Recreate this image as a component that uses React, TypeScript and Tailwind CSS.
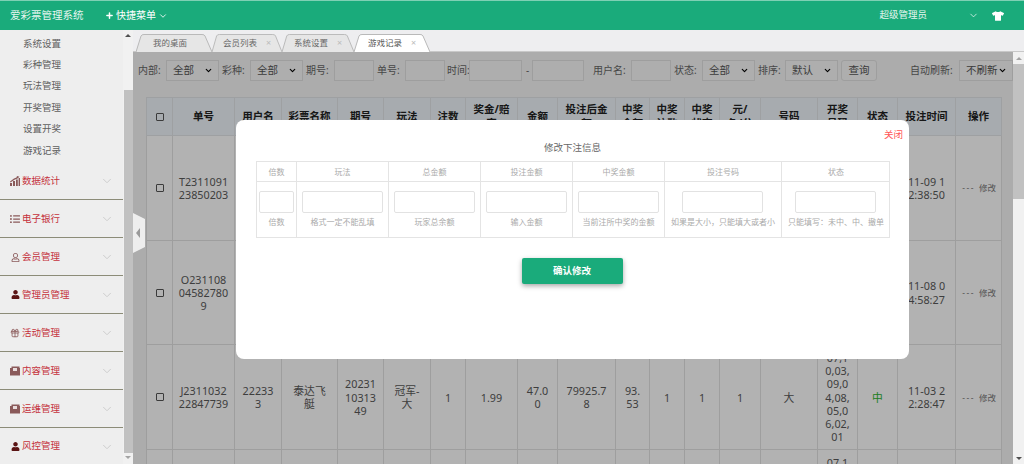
import { ChevronDown, Gift, Plus } from "lucide-react";
import { FaListUl, FaRegUser, FaTshirt, FaUser } from "react-icons/fa";

const font = { fontFamily: '"Noto Sans", "Noto Sans CJK SC", sans-serif' };

const subMenu = ["系统设置", "彩种管理", "玩法管理", "开奖管理", "设置开奖", "游戏记录"];

function ChartIcon() {
  return (
    <svg className="h-[10px] w-[10px]" viewBox="0 0 10 10" fill="currentColor">
      <path d="M0 7h2v3H0zM3 5h2v5H3zM6 3.5h1.800v6.500H6zM8.600 2H10v8H8.600z" />
      <path d="M0 5.500 L4 2.500 L6.500 1.500 L7 0 L9.500 0.800 L7.500 2.500 L4.500 3.800 L0.500 6.500 Z" />
    </svg>
  );
}

function BookIcon() {
  return (
    <svg className="h-[10px] w-[10px]" viewBox="0 0 10 10">
      <path d="M0 2h1.500V0.500H9.500V2H10v7.500H0z" fill="currentColor" />
      <path d="M3 2h4v3H3z" fill="#e8dcdc" />
    </svg>
  );
}

const groups = [
  { name: "数据统计", icon: <ChartIcon /> },
  { name: "电子银行", icon: <FaListUl className="h-[10px] w-[10px]" /> },
  { name: "会员管理", icon: <FaRegUser className="h-[9px] w-[9px]" /> },
  { name: "管理员管理", icon: <FaUser className="h-[9px] w-[9px] text-[#5a1414]" /> },
  { name: "活动管理", icon: <Gift className="h-[10px] w-[10px]" /> },
  { name: "内容管理", icon: <BookIcon /> },
  { name: "运维管理", icon: <BookIcon /> },
  { name: "风控管理", icon: <FaUser className="h-[9px] w-[9px] text-[#5a1414]" /> },
];

const tabs = [
  { label: "我的桌面", w: "w-[76px] pr-[8px]", close: false, active: false },
  { label: "会员列表", w: "w-[70px]", close: true, active: false },
  { label: "系统设置", w: "w-[72px]", close: true, active: false },
  { label: "游戏记录", w: "w-[76px]", close: true, active: true },
];

const headers = [
  { label: "", w: "w-[26px]" },
  { label: "单号", w: "w-[62px]" },
  { label: "用户名", w: "w-[47px]" },
  { label: "彩票名称", w: "w-[56px]" },
  { label: "期号", w: "w-[46px]" },
  { label: "玩法", w: "w-[47px]" },
  { label: "注数", w: "w-[35px]" },
  { label: "奖金/赔率", w: "w-[52px]" },
  { label: "金额", w: "w-[40px]" },
  { label: "投注后金额", w: "w-[58px]" },
  { label: "中奖金额", w: "w-[34px]" },
  { label: "中奖注数", w: "w-[35px]" },
  { label: "中奖状态", w: "w-[35px]" },
  { label: "元/\n角/分", w: "w-[41px]" },
  { label: "号码", w: "w-[57px]" },
  { label: "开奖号码", w: "w-[40px]" },
  { label: "状态", w: "w-[40px]" },
  { label: "投注时间", w: "w-[58px]" },
  { label: "操作", w: "w-[46px]" },
];

const rows = [
  {
    id: "T231109123850203", user: "", lottery: "", issue: "", play: "", notes: "", odds: "", amount: "", after: "", win: "", winNotes: "", winState: "", unit: "", code: "", open: "",
    state: "", time: "11-09 12:38:50",
  },
  {
    id: "O231108045827809", user: "", lottery: "", issue: "", play: "", notes: "", odds: "", amount: "", after: "", win: "", winNotes: "", winState: "", unit: "", code: "", open: "",
    state: "", time: "11-08 04:58:27",
  },
  {
    id: "J231103222847739", user: "222333", lottery: "泰达飞艇", issue: "2023110313 49", play: "冠军-大", notes: "1", odds: "1.99", amount: "47.00", after: "79925.78", win: "93.53", winNotes: "1", winState: "1", unit: "1", code: "大",
    open: "07,10,03,09,04,08,05,06,02,01", state: "中", time: "11-03 22:28:47",
  },
  {
    id: "", user: "", lottery: "", issue: "", play: "", notes: "", odds: "", amount: "", after: "", win: "", winNotes: "", winState: "", unit: "", code: "", open: "07,1",
    state: "", time: "",
  },
];

const modalCols = [
  { title: "倍数", hint: "倍数", w: "w-[40px]", input: "w-[35px] mr-[1px]" },
  { title: "玩法", hint: "格式一定不能乱填", w: "w-[92px]", input: "w-[81px]" },
  { title: "总金额", hint: "玩家总余额", w: "w-[92px]", input: "w-[81px]" },
  { title: "投注金额", hint: "输入金额", w: "w-[92px]", input: "w-[81px]" },
  { title: "中奖金额", hint: "当前注所中奖的金额", w: "w-[92px]", input: "w-[81px] mr-[1px]" },
  { title: "投注号码", hint: "如果是大小，只能填大或者小", w: "w-[117px]", input: "w-[81px] mr-[2px]" },
  { title: "状态", hint: "只能填写：未中、中、撤单", w: "w-[108px]", input: "w-[81px] mr-[2px]" },
];

function Select({ value, width }: { value: string; width: string }) {
  return (
    <div className={`flex h-[21px] items-center justify-between border border-[#e2e2e2] bg-[#f9f9f9] pl-[6px] pr-[5px] text-[10.5px] text-[#555] ${width}`}>
      <span>{value}</span>
      <ChevronDown className="h-[9px] w-[9px] text-black" strokeWidth={3} />
    </div>
  );
}

function Field({ width }: { width: string }) {
  return <div className={`h-[21px] border border-[#e2e2e2] bg-[#f9f9f9] ${width}`} />;
}

function Label({ text, className }: { text: string; className: string }) {
  return <span className={`text-[10px] whitespace-nowrap text-[#666] ${className}`}>{text}</span>;
}

function Sidebar() {
  return (
    <aside className="flex h-full w-[133px] shrink-0 bg-[#eeeeee]">
      <div className="w-[123px] overflow-hidden">
        <ul className="pt-[3px]">
          {subMenu.map((item) => (
            <li key={item} className="flex h-[21.4px] items-center pl-[23px] text-[9.5px] text-[#5f5f5f]">
              {item}
            </li>
          ))}
        </ul>
        <ul className="mt-[1px]">
          {groups.map((g) => (
            <li key={g.name} className="flex h-[37.9px] items-center border-b border-[#8c8c78] pt-[1px] pl-[9px] pr-[9px] text-[9.5px] text-[#c5323c]">
              <span className="flex w-[12px] justify-center text-[#8a5a5a]">{g.icon}</span>
              <span className="ml-[1px] flex-1">{g.name}</span>
              <ChevronDown className="h-[14px] w-[14px] text-[#c8c8c8]" strokeWidth={1.5} />
            </li>
          ))}
        </ul>
      </div>
      <div className="flex h-full w-[10px] flex-col items-center bg-[#f1f1f1]">
        <div className="mt-[4px] h-0 w-0 border-x-[3px] border-b-[3px] border-x-transparent border-b-[#505050]" />
        <div className="mt-[53px] h-[363px] w-[9px] bg-[#c1c1c1]" />
        <div className="mt-[3px] h-0 w-0 border-x-[3px] border-t-[3px] border-x-transparent border-t-[#a3a3a3]" />
      </div>
    </aside>
  );
}

function TabBar() {
  return (
    <div className="flex h-[22px] shrink-0 items-end border-b border-[#c8c8c8] bg-[#eeeef0] pl-[3px]">
      {tabs.map((t) => (
        <div key={t.label} className={`relative -mb-px flex h-[18px] items-center justify-center text-[8.5px] ${t.w} ${t.active ? "text-[#555]" : "text-[#666]"}`}>
          <svg className="absolute inset-0 h-full w-full" viewBox="0 0 76 18" preserveAspectRatio="none">
            <path
              d="M0 18 L5 2 Q5.6 0.5 8 0.5 L66 0.5 Q68.500 0.5 69 2 L76 18"
              fill={t.active ? "#ffffff" : "#e6e6e6"}
              stroke="#b9b9b9"
              strokeWidth="1"
            />
          </svg>
          <span className="relative">{t.label}</span>
          {t.close && <span className="relative ml-[9px] text-[9px] text-[#bbb]">×</span>}
        </div>
      ))}
    </div>
  );
}

function FilterBar() {
  return (
    <div className="flex items-center pl-[5px] pt-[8px]">
      <Label text="内部:" className="w-[28px]" />
      <Select value="全部" width="w-[53px]" />
      <Label text="彩种:" className="ml-[3px] w-[28px]" />
      <Select value="全部" width="w-[53px]" />
      <Label text="期号:" className="ml-[3px] w-[28px]" />
      <Field width="w-[40px]" />
      <Label text="单号:" className="ml-[3px] w-[28px]" />
      <Field width="w-[40px]" />
      <Label text="时间:" className="ml-[2px] w-[22px]" />
      <Field width="w-[53px]" />
      <Label text="-" className="ml-[4px] w-[6px]" />
      <Field width="w-[52px]" />
      <Label text="用户名:" className="ml-[9px] w-[38px]" />
      <Field width="w-[40px]" />
      <Label text="状态:" className="ml-[3px] w-[28px]" />
      <Select value="全部" width="w-[53px]" />
      <Label text="排序:" className="ml-[3px] w-[27px]" />
      <Select value="默认" width="w-[53px]" />
      <div className="ml-[3px] flex h-[21px] w-[36px] items-center justify-center rounded-[3px] border border-[#e2e2e2] bg-[#f9f9f9] text-[10.5px] text-[#555]">
        查询
      </div>
      <Label text="自动刷新:" className="ml-[33px] w-[49px]" />
      <Select value="不刷新" width="w-[54px] -mr-px" />
    </div>
  );
}

function BetTable() {
  return (
    <div className="mt-[16px] pl-[13px]">
      <table className="w-[854px] table-fixed border-collapse bg-white text-center text-[10.8px] leading-[13.3px] text-[#5a5a5a]">
        <thead>
          <tr className="h-[38px] bg-[#eff5fb]">
            {headers.map((h, i) => (
              <th key={i} className={`border border-[#e3e6e8] px-[5px] text-[10.5px] font-bold whitespace-pre-line text-[#222] ${h.w}`}>
                {i === 0 ? <span className="mx-auto block h-[8px] w-[8px] rounded-[1px] border border-[#555]" /> : h.label}
              </th>
            ))}
          </tr>
        </thead>
        <tbody>
          {rows.map((r, i) => (
            <tr key={i} className="h-[104.7px]">
              <td className="border border-[#e3e3e3]">
                {r.id && <span className="mx-auto block h-[8px] w-[8px] rounded-[1px] border border-[#555]" />}
              </td>
              {[r.id, r.user, r.lottery, r.issue, r.play, r.notes, r.odds, r.amount, r.after, r.win, r.winNotes, r.winState, r.unit, r.code, r.open].map((v, j) => (
                <td key={j} className={`border border-[#e3e3e3] break-all ${j === 0 || j === 3 || j === 14 ? "px-[5px]" : "px-[7px]"} ${i === 3 ? "align-top pt-[6px]" : ""}`}>
                  {v}
                </td>
              ))}
              <td className="border border-[#e3e3e3] px-[5px] text-[#2db52d]">{r.state}</td>
              <td className="border border-[#e3e3e3] px-[8px] break-all">{r.time}</td>
              <td className="border border-[#e3e3e3] pr-[5px] text-right text-[8.5px] text-[#777]">
                {r.id && (
                  <>
                    <span className="mr-[4px] tracking-[1.5px]">---</span>修改
                  </>
                )}
              </td>
            </tr>
          ))}
        </tbody>
      </table>
    </div>
  );
}

function Modal() {
  return (
    <div className="absolute top-[68px] left-[103px] h-[239px] w-[673px] rounded-[8px] bg-white">
      <span className="absolute top-[8px] right-[6px] text-[9.5px] text-[#ff5555]">关闭</span>
      <p className="pt-[21px] text-center text-[9.5px] leading-[13px] text-[#666]">修改下注信息</p>
      <div className="mt-[7px] ml-[20px] flex w-[634px] border border-[#e4e4e4]">
        {modalCols.map((c) => (
          <div key={c.title} className={`flex shrink-0 flex-col border-r border-[#e4e4e4] last:border-r-0 ${c.w}`}>
            <div className="flex h-[20px] items-center justify-center border-b border-[#e4e4e4] text-[8px] text-[#aaa]">
              {c.title}
            </div>
            <div className="flex h-[55px] flex-col items-center pt-[9px]">
              <div className={`h-[22px] rounded-[2px] border border-[#e2e2e2] ${c.input}`} />
              <span className="mt-[3px] text-[8px] whitespace-nowrap text-[#aaa]">{c.hint}</span>
            </div>
          </div>
        ))}
      </div>
      <div className="mt-[20px] flex justify-center">
        <button className="ml-[-1px] h-[26px] w-[101px] rounded-[2px] bg-[#1aab7b] text-[9.5px] font-bold text-white shadow-[0_2px_5px_rgba(0,0,0,0.35)]">
          确认修改
        </button>
      </div>
    </div>
  );
}

export default function App() {
  return (
    <div className="flex h-[464px] w-[1024px] flex-col overflow-hidden bg-white" style={font}>
      <header className="flex h-[30px] shrink-0 items-center border-t border-[#7fd0b4] bg-[#1aab7b] pl-[10px] text-[10.5px] text-white">
        <span className="w-[95px] text-[#e6f5ef]">爱彩票管理系统</span>
        <Plus className="h-[9px] w-[9px]" strokeWidth={4} />
        <span className="ml-[2px] text-[10px]">快捷菜单</span>
        <ChevronDown className="ml-[2px] h-[10px] w-[10px]" strokeWidth={2} />
        <span className="ml-auto text-[9.5px] text-[#e6f5ef]">超级管理员</span>
        <ChevronDown className="ml-[41px] h-[11px] w-[11px]" strokeWidth={1.5} />
        <FaTshirt className="mr-[20px] ml-[13px] h-[12px] w-[12px]" />
      </header>
      <div className="flex min-h-0 flex-1">
        <Sidebar />
        <main className="relative flex min-w-0 flex-1 flex-col">
          <TabBar />
          <div className="flex min-h-0 flex-1">
            <div className="relative w-[880px] shrink-0 overflow-hidden bg-[#f7f7f7]">
              <FilterBar />
              <BetTable />
              <div className="absolute inset-0 bg-black/30" />
              <Modal />
            </div>
            <div className="flex w-[11px] flex-col items-center bg-[#f1f1f1]">
              <div className="mt-[5px] h-0 w-0 border-x-[3px] border-b-[3px] border-x-transparent border-b-[#a3a3a3]" />
              <div className="mt-[4px] h-[135px] w-full bg-[#c1c1c1]" />
              <div className="mt-auto mb-[4px] h-0 w-0 border-x-[3px] border-t-[3px] border-x-transparent border-t-[#505050]" />
            </div>
          </div>
          <svg className="absolute top-[183px] left-0 h-[40px] w-[12px]" viewBox="0 0 12 40">
            <path d="M0 0 L12 6 L12 34 L0 40 Z" fill="#eeeeee" />
            <path d="M7 15 L3 20 L7 25 Z" fill="#9a9a9a" />
          </svg>
        </main>
      </div>
    </div>
  );
}
